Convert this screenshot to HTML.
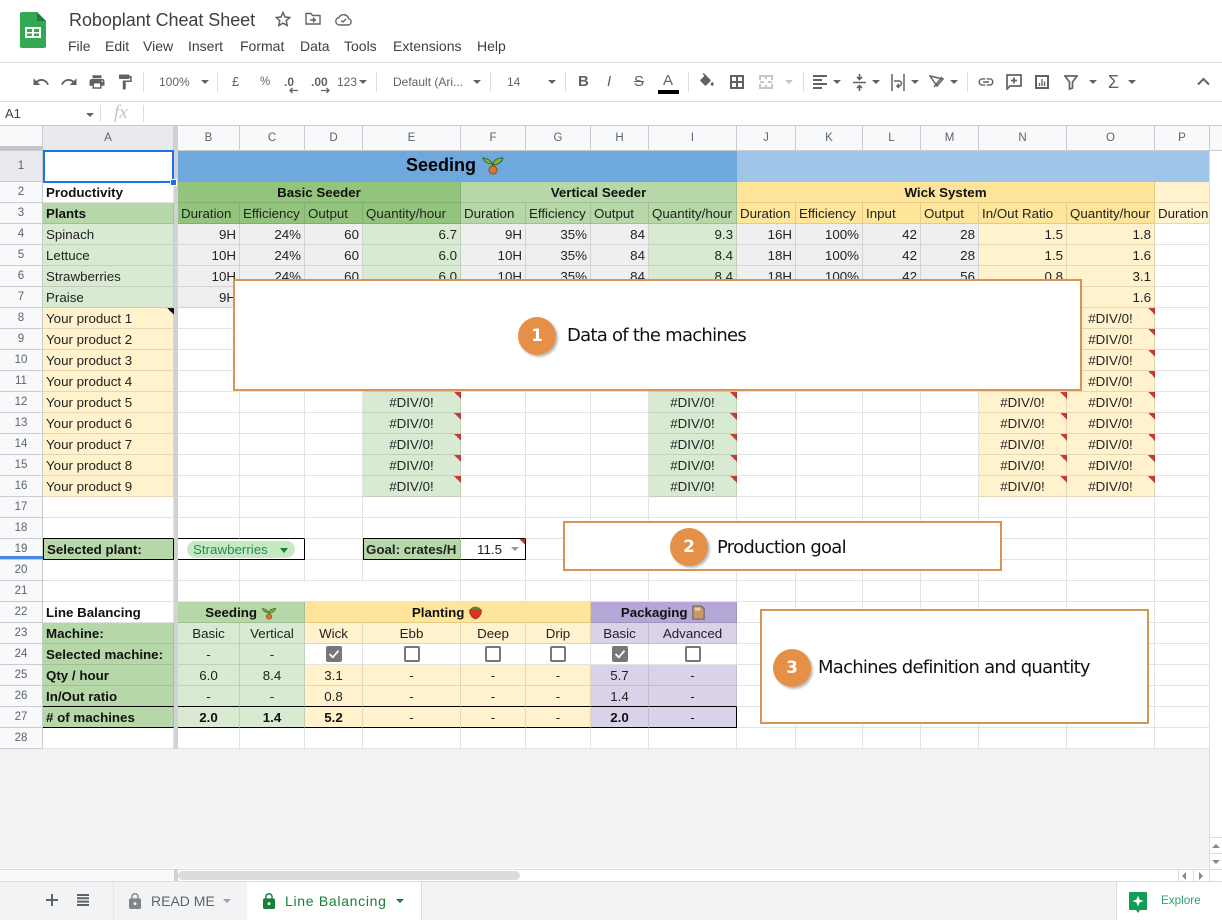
<!DOCTYPE html>
<html><head><meta charset="utf-8"><title>Roboplant Cheat Sheet</title>
<style>
html,body{margin:0;padding:0;background:#fff}
body{width:1222px;height:920px;position:relative;overflow:hidden;font-family:"Liberation Sans",Arial,sans-serif;color:#222}
.a{position:absolute;white-space:nowrap}
.m{font-size:14px;top:38px;color:#3c4043;line-height:16px}
.t{font-size:12px;color:#5f6368;top:74px;line-height:16px}
.sep{position:absolute;top:72px;width:1px;height:20px;background:#dadce0}
.car{position:absolute;width:0;height:0;border-left:4px solid transparent;border-right:4px solid transparent;border-top:4px solid #5f6368}
svg.i{position:absolute;fill:#5f6368}
table{position:absolute;left:0;top:126px;border-collapse:separate;border-spacing:0;table-layout:fixed;width:1210px}
td{box-sizing:border-box;height:21px;padding:2px 3px 0;font-size:13.33px;line-height:18px;white-space:nowrap;overflow:hidden;border-right:1px solid rgba(0,0,0,.11);border-bottom:1px solid rgba(0,0,0,.11);color:#222}
td.h{background:#f8f9fa;color:#5f6368;font-size:11.5px;text-align:center;padding:0;border-color:#c9cbcf}
td.s{background:#e8eaed}
td.z{background:#d0d2d6;padding:0;border:0}
.c{text-align:center}.r{text-align:right}.b{font-weight:bold;color:#111}
.g{background-color:#d9ead3}.gg{background-color:#b6d7a8}.dg{background-color:#93c47d}
.y{background-color:#fff2cc}.yy{background-color:#ffe599}
.p{background-color:#d9d2e9}.pp{background-color:#b4a7d6}.e{background-color:#efefef}
.tr,.tk{background-repeat:no-repeat;background-origin:border-box;background-position:right top;background-size:7px 7px}
.tr{background-image:linear-gradient(to bottom left,#cc3b33 50%,transparent 50%)}
.tk{background-image:linear-gradient(to bottom left,#111 50%,transparent 50%)}
.bt{border-top:1px solid #000}.bb{border-bottom:1px solid #000}.bl{border-left:1px solid #000}.br{border-right:1px solid #000}
.box{position:absolute;box-sizing:border-box;background:#fff;border:2px solid #d69455}
.cir{position:absolute;width:38px;height:38px;border-radius:50%;background:#e58f47;color:#fff;font:bold 17px/38px "DejaVu Sans",sans-serif;text-align:center;box-shadow:2px 2px 2px #bbb}
.lab{position:absolute;white-space:nowrap;font:18px/24px "DejaVu Sans",sans-serif;letter-spacing:-.74px;color:#111}
.cb{display:inline-block;box-sizing:border-box;width:16px;height:16px;border:2px solid #777;border-radius:2px;vertical-align:middle;margin-top:-1px;background:#fff}
</style></head><body>

<!-- Header -->
<svg class="a" style="left:20px;top:12px" width="26" height="36" viewBox="0 0 26 36"><path d="M2 0h15l9 9v25a2 2 0 0 1-2 2H2a2 2 0 0 1-2-2V2a2 2 0 0 1 2-2z" fill="#34a853"/><path d="M17 0l9 9h-9z" fill="#188038"/><path d="M5 15h16v11H5z" fill="#fff"/><path d="M7 17h5v3H7zM14 17h5v3h-5zM7 21.500h5V24H7zM14 21.500h5V24h-5z" fill="#34a853"/></svg>
<div class="a" style="left:69px;top:9px;font-size:18px;line-height:22px;color:#3c4043;letter-spacing:-.05px">Roboplant Cheat Sheet</div>
<svg class="i" style="left:275px;top:11px;fill:none;stroke:#5f6368;stroke-width:1.500" width="16" height="16" viewBox="0 0 16 16"><path d="M8 1.500l2 4.500 4.800.5-3.600 3.200 1 4.800L8 12.100 3.800 14.500l1-4.800L1.200 6.500 6 6z"/></svg>
<svg class="i" style="left:305px;top:12px;fill:none;stroke:#5f6368;stroke-width:1.400" width="16" height="14" viewBox="0 0 16 14"><path d="M1 2.500V12h14V3.500H7.500L6 1.500H1zM5 8h5M8 5.800L10.300 8 8 10.200"/></svg>
<svg class="i" style="left:335px;top:13px;fill:none;stroke:#5f6368;stroke-width:1.400" width="17" height="13" viewBox="0 0 17 13"><path d="M4 12h9a3.300 3.300 0 0 0 .6-6.500A5.200 5.200 0 0 0 4 4.500 3.800 3.800 0 0 0 4 12zM6 7.500l2 1.500 3-3"/></svg>
<span class="a m" style="left:68px">File</span><span class="a m" style="left:105px">Edit</span><span class="a m" style="left:143px">View</span><span class="a m" style="left:188px">Insert</span><span class="a m" style="left:240px">Format</span><span class="a m" style="left:300px">Data</span><span class="a m" style="left:344px">Tools</span><span class="a m" style="left:393px">Extensions</span><span class="a m" style="left:477px">Help</span>

<div class="a" style="left:0;top:62px;width:1222px;height:1px;background:#dadce0"></div>
<div class="a" style="left:0;top:101px;width:1222px;height:1px;background:#dadce0"></div>

<!-- Toolbar -->
<svg class="i" style="left:32px;top:73px" width="18" height="18" viewBox="0 0 24 24"><path d="M12.500 8c-2.650 0-5.050.99-6.900 2.600L2 7v9h9l-3.620-3.620c1.390-1.160 3.160-1.880 5.120-1.880 3.540 0 6.550 2.310 7.600 5.500l2.370-.78C21.080 11.030 17.150 8 12.500 8z"/></svg>
<svg class="i" style="left:60px;top:73px" width="18" height="18" viewBox="0 0 24 24"><path d="M18.400 10.600C16.550 8.990 14.150 8 11.500 8c-4.650 0-8.580 3.030-9.960 7.220L3.900 16c1.050-3.190 4.050-5.500 7.600-5.500 1.950 0 3.730.72 5.120 1.880L13 16h9V7l-3.600 3.600z"/></svg>
<svg class="i" style="left:88px;top:73px" width="18" height="18" viewBox="0 0 24 24"><path d="M19 8H5c-1.660 0-3 1.340-3 3v6h4v4h12v-4h4v-6c0-1.660-1.340-3-3-3zm-3 11H8v-5h8v5zm3-7c-.55 0-1-.45-1-1s.45-1 1-1 1 .45 1 1-.45 1-1 1zm-1-9H6v4h12V3z"/></svg>
<svg class="i" style="left:116px;top:73px" width="18" height="18" viewBox="0 0 24 24"><path d="M18 4V3c0-.55-.45-1-1-1H5c-.55 0-1 .45-1 1v4c0 .55.45 1 1 1h12c.55 0 1-.45 1-1V6h1v4H9v11c0 .55.45 1 1 1h2c.55 0 1-.45 1-1v-9h8V4h-3z"/></svg>
<div class="sep" style="left:143px"></div>
<span class="a t" style="left:159px">100%</span><div class="car" style="left:201px;top:80px"></div>
<div class="sep" style="left:217px"></div>
<span class="a t" style="left:232px;top:74px;font-size:13px">£</span><span class="a t" style="left:260px;top:74px;font-size:11.5px">%</span>
<span class="a t" style="left:284px;top:74px"><b>.0</b></span><svg class="i" style="left:289px;top:87px;fill:none;stroke:#5f6368;stroke-width:1.300" width="10" height="7"><path d="M9 3.500H1M3.500 1L1 3.500 3.500 6"/></svg>
<span class="a t" style="left:311px;top:74px"><b>.00</b></span><svg class="i" style="left:320px;top:87px;fill:none;stroke:#5f6368;stroke-width:1.300" width="10" height="7"><path d="M1 3.500h8M6.500 1L9 3.500 6.500 6"/></svg>
<span class="a t" style="left:337px;top:74px">123</span><div class="car" style="left:359px;top:80px"></div>
<div class="sep" style="left:376px"></div>
<span class="a t" style="left:393px;top:74px">Default (Ari...</span><div class="car" style="left:473px;top:80px"></div>
<div class="sep" style="left:490px"></div>
<span class="a t" style="left:507px">14</span><div class="car" style="left:548px;top:80px"></div>
<div class="sep" style="left:565px"></div>
<span class="a" style="left:578px;top:74px;font:bold 15px/16px 'Liberation Sans',sans-serif;color:#5f6368">B</span>
<span class="a" style="left:607px;top:74px;font:italic 15px/16px 'Liberation Sans',sans-serif;color:#5f6368">I</span>
<span class="a" style="left:634px;top:74px;font:15px/16px 'Liberation Sans',sans-serif;color:#5f6368;text-decoration:line-through">S</span>
<span class="a" style="left:663px;top:73px;font:15px/16px 'Liberation Sans',sans-serif;color:#5f6368">A</span>
<div class="a" style="left:658px;top:90px;width:21px;height:4px;background:#000"></div>
<div class="sep" style="left:688px"></div>
<svg class="i" style="left:698px;top:73px" width="18" height="18" viewBox="0 0 24 24"><path d="M16.560 8.940L7.620 0 6.210 1.410l2.380 2.380-5.150 5.150c-.59.59-.59 1.540 0 2.120l5.500 5.500c.29.29.68.44 1.060.44s.77-.15 1.060-.44l5.500-5.500c.59-.58.59-1.530 0-2.120zM19 11.500s-2 2.170-2 3.500c0 1.100.9 2 2 2s2-.9 2-2c0-1.330-2-3.500-2-3.500z"/></svg>
<svg class="i" style="left:730px;top:75px;fill:none;stroke:#5f6368;stroke-width:2" width="14" height="14"><path d="M1 1h12v12H1zM7 1v12M1 7h12"/></svg>
<svg class="i" style="left:759px;top:75px;fill:none;stroke:#c4c6c9;stroke-width:2" width="14" height="14"><path d="M1 5V1h12v4M1 9v4h12V9M7 1v3M7 10v3M1 7h4M9 7h4"/></svg>
<div class="car" style="left:785px;top:80px;border-top-color:#c4c6c9"></div>
<div class="sep" style="left:803px"></div>
<svg class="i" style="left:813px;top:75px" width="15" height="14"><path d="M0 0h14v2H0zM0 4h9v2H0zM0 8h14v2H0zM0 12h9v2H0z"/></svg><div class="car" style="left:833px;top:80px"></div>
<svg class="i" style="left:853px;top:74px;fill:none;stroke:#5f6368;stroke-width:1.600" width="13" height="17"><path d="M0 8.500h13M6.500 0v5M4 3l2.500 2.500L9 3M6.500 17v-5M4 14l2.500-2.500L9 14"/></svg><div class="car" style="left:872px;top:80px"></div>
<svg class="i" style="left:891px;top:74px;fill:none;stroke:#5f6368;stroke-width:1.500" width="14" height="17"><path d="M1 0v17M13 0v17M3 7h5a2.500 2.500 0 0 1 0 5H6M8 10l-2 2 2 2"/></svg><div class="car" style="left:911px;top:80px"></div>
<svg class="i" style="left:929px;top:74px;fill:none;stroke:#5f6368;stroke-width:1.500" width="17" height="17"><path d="M1 2l13 3-6 7zM5 13L13 3"/></svg><div class="car" style="left:950px;top:80px"></div>
<div class="sep" style="left:967px"></div>
<svg class="i" style="left:977px;top:73px" width="18" height="18" viewBox="0 0 24 24"><path d="M3.900 12c0-1.710 1.390-3.100 3.100-3.100h4V7H7c-2.760 0-5 2.240-5 5s2.240 5 5 5h4v-1.900H7c-1.710 0-3.100-1.390-3.100-3.100zM8 13h8v-2H8v2zm9-6h-4v1.900h4c1.710 0 3.100 1.390 3.100 3.100s-1.390 3.100-3.100 3.100h-4V17h4c2.760 0 5-2.240 5-5s-2.240-5-5-5z"/></svg>
<svg class="i" style="left:1006px;top:74px;fill:none;stroke:#5f6368;stroke-width:1.700" width="16" height="16"><path d="M1 1h14v11H4l-3 3zM8 3.500v6M5 6.500h6"/></svg>
<svg class="i" style="left:1035px;top:75px;fill:none;stroke:#5f6368;stroke-width:2" width="14" height="14"><path d="M1 1h12v12H1z"/><path d="M4.500 11V8M7 11V4M9.500 11V6.500" stroke-width="1.300"/></svg>
<svg class="i" style="left:1064px;top:75px;fill:none;stroke:#5f6368;stroke-width:1.700" width="14" height="15"><path d="M1 1h12L8.500 7v6l-3 1V7z"/></svg><div class="car" style="left:1089px;top:80px"></div>
<span class="a" style="left:1108px;top:72px;font:18px/20px 'Liberation Sans',sans-serif;color:#5f6368">Σ</span><div class="car" style="left:1128px;top:80px"></div>
<svg class="i" style="left:1197px;top:77px;fill:none;stroke:#5f6368;stroke-width:2" width="13" height="9"><path d="M1 7.500l5.500-5.500 5.500 5.500"/></svg>

<!-- Formula bar -->
<span class="a" style="left:5px;top:106px;font-size:13px;line-height:16px;color:#3c4043">A1</span>
<div class="car" style="left:86px;top:113px"></div>
<div class="a" style="left:100px;top:105px;width:1px;height:17px;background:#dadce0"></div>
<span class="a" style="left:114px;top:102px;font:italic 19px/22px 'Liberation Serif',serif;color:#c4c6c9">fx</span>
<div class="a" style="left:143px;top:105px;width:1px;height:17px;background:#dadce0"></div>
<div class="a" style="left:0;top:125px;width:1222px;height:1px;background:#c9cbcf"></div>

<!-- Grid -->
<table>
<colgroup><col style="width:43px"><col style="width:131px"><col style="width:4px"><col style="width:62px"><col style="width:65px"><col style="width:58px"><col style="width:98px"><col style="width:65px"><col style="width:65px"><col style="width:58px"><col style="width:88px"><col style="width:59px"><col style="width:67px"><col style="width:58px"><col style="width:58px"><col style="width:88px"><col style="width:88px"><col style="width:55px"></colgroup>
<tr style="height:25px"><td class="h" style="height:25px"></td><td class="h s">A</td><td class="z"></td><td class="h">B</td><td class="h">C</td><td class="h">D</td><td class="h">E</td><td class="h">F</td><td class="h">G</td><td class="h">H</td><td class="h">I</td><td class="h">J</td><td class="h">K</td><td class="h">L</td><td class="h">M</td><td class="h">N</td><td class="h">O</td><td class="h">P</td></tr>
<tr><td class="h s" style="height:31px">1</td><td></td><td class="z"></td><td colspan="8" class="c" style="background:#6fa8dc;border:0;font:bold 18px/26px 'Liberation Sans',sans-serif;color:#000;padding:0 4px 4px 0;height:31px">Seeding <svg width="24" height="22" viewBox="0 0 24 22" style="vertical-align:-4px"><path d="M12 13C11 9 9 6 2 5c1 4 5 6 10 6M12 12c0-4 3-7 10-7-1 4-5 7-10 7" fill="#7cb342" stroke="#33691e" stroke-width="1"/><path d="M12 10v6" stroke="#33691e" stroke-width="1.500"/><circle cx="12" cy="17" r="4" fill="#d97a2b" stroke="#8a4a12"/></svg></td><td colspan="7" style="background:#9fc5e8;border:0"></td></tr>
<tr><td class="h">2</td><td class="b">Productivity</td><td class="z"></td><td colspan="4" class="dg b c">Basic Seeder</td><td colspan="4" class="gg b c">Vertical Seeder</td><td colspan="6" class="yy b c">Wick System</td><td class="y"></td></tr>
<tr><td class="h">3</td><td class="gg b">Plants</td><td class="z"></td><td class="dg">Duration</td><td class="dg">Efficiency</td><td class="dg">Output</td><td class="dg">Quantity/hour</td><td class="gg">Duration</td><td class="gg">Efficiency</td><td class="gg">Output</td><td class="gg">Quantity/hour</td><td class="yy">Duration</td><td class="yy">Efficiency</td><td class="yy">Input</td><td class="yy">Output</td><td class="yy">In/Out Ratio</td><td class="yy">Quantity/hour</td><td class="y">Duration</td></tr>
<tr><td class="h">4</td><td class="g">Spinach</td><td class="z"></td><td class="e r">9H</td><td class="e r">24%</td><td class="e r">60</td><td class="g r">6.7</td><td class="e r">9H</td><td class="e r">35%</td><td class="e r">84</td><td class="g r">9.3</td><td class="e r">16H</td><td class="e r">100%</td><td class="e r">42</td><td class="e r">28</td><td class="y r">1.5</td><td class="y r">1.8</td><td></td></tr>
<tr><td class="h">5</td><td class="g">Lettuce</td><td class="z"></td><td class="e r">10H</td><td class="e r">24%</td><td class="e r">60</td><td class="g r">6.0</td><td class="e r">10H</td><td class="e r">35%</td><td class="e r">84</td><td class="g r">8.4</td><td class="e r">18H</td><td class="e r">100%</td><td class="e r">42</td><td class="e r">28</td><td class="y r">1.5</td><td class="y r">1.6</td><td></td></tr>
<tr><td class="h">6</td><td class="g">Strawberries</td><td class="z"></td><td class="e r">10H</td><td class="e r">24%</td><td class="e r">60</td><td class="g r">6.0</td><td class="e r">10H</td><td class="e r">35%</td><td class="e r">84</td><td class="g r">8.4</td><td class="e r">18H</td><td class="e r">100%</td><td class="e r">42</td><td class="e r">56</td><td class="y r">0.8</td><td class="y r">3.1</td><td></td></tr>
<tr><td class="h">7</td><td class="g">Praise</td><td class="z"></td><td class="e r">9H</td><td></td><td></td><td class="g"></td><td></td><td></td><td></td><td class="g"></td><td></td><td></td><td></td><td></td><td class="y"></td><td class="y r">1.6</td><td></td></tr>
<tr><td class="h">8</td><td class="y tk">Your product 1</td><td class="z"></td><td></td><td></td><td></td><td class="g"></td><td></td><td></td><td></td><td class="g"></td><td></td><td></td><td></td><td></td><td class="y"></td><td class="y c tr">#DIV/0!</td><td></td></tr>
<tr><td class="h">9</td><td class="y">Your product 2</td><td class="z"></td><td></td><td></td><td></td><td class="g"></td><td></td><td></td><td></td><td class="g"></td><td></td><td></td><td></td><td></td><td class="y"></td><td class="y c tr">#DIV/0!</td><td></td></tr>
<tr><td class="h">10</td><td class="y">Your product 3</td><td class="z"></td><td></td><td></td><td></td><td class="g"></td><td></td><td></td><td></td><td class="g"></td><td></td><td></td><td></td><td></td><td class="y"></td><td class="y c tr">#DIV/0!</td><td></td></tr>
<tr><td class="h">11</td><td class="y">Your product 4</td><td class="z"></td><td></td><td></td><td></td><td class="g"></td><td></td><td></td><td></td><td class="g"></td><td></td><td></td><td></td><td></td><td class="y"></td><td class="y c tr">#DIV/0!</td><td></td></tr>
<tr><td class="h">12</td><td class="y">Your product 5</td><td class="z"></td><td></td><td></td><td></td><td class="g c tr">#DIV/0!</td><td></td><td></td><td></td><td class="g c tr">#DIV/0!</td><td></td><td></td><td></td><td></td><td class="y c tr">#DIV/0!</td><td class="y c tr">#DIV/0!</td><td></td></tr>
<tr><td class="h">13</td><td class="y">Your product 6</td><td class="z"></td><td></td><td></td><td></td><td class="g c tr">#DIV/0!</td><td></td><td></td><td></td><td class="g c tr">#DIV/0!</td><td></td><td></td><td></td><td></td><td class="y c tr">#DIV/0!</td><td class="y c tr">#DIV/0!</td><td></td></tr>
<tr><td class="h">14</td><td class="y">Your product 7</td><td class="z"></td><td></td><td></td><td></td><td class="g c tr">#DIV/0!</td><td></td><td></td><td></td><td class="g c tr">#DIV/0!</td><td></td><td></td><td></td><td></td><td class="y c tr">#DIV/0!</td><td class="y c tr">#DIV/0!</td><td></td></tr>
<tr><td class="h">15</td><td class="y">Your product 8</td><td class="z"></td><td></td><td></td><td></td><td class="g c tr">#DIV/0!</td><td></td><td></td><td></td><td class="g c tr">#DIV/0!</td><td></td><td></td><td></td><td></td><td class="y c tr">#DIV/0!</td><td class="y c tr">#DIV/0!</td><td></td></tr>
<tr><td class="h">16</td><td class="y">Your product 9</td><td class="z"></td><td></td><td></td><td></td><td class="g c tr">#DIV/0!</td><td></td><td></td><td></td><td class="g c tr">#DIV/0!</td><td></td><td></td><td></td><td></td><td class="y c tr">#DIV/0!</td><td class="y c tr">#DIV/0!</td><td></td></tr>
<tr><td class="h">17</td><td></td><td class="z"></td><td></td><td></td><td></td><td></td><td></td><td></td><td></td><td></td><td></td><td></td><td></td><td></td><td></td><td></td><td></td></tr>
<tr><td class="h">18</td><td style="border-bottom-color:#000"></td><td class="z"></td><td style="border-bottom-color:#000"></td><td style="border-bottom-color:#000"></td><td></td><td style="border-bottom-color:#000"></td><td style="border-bottom-color:#000"></td><td></td><td></td><td></td><td></td><td></td><td></td><td></td><td></td><td></td><td></td></tr>
<tr><td class="h">19</td><td class="gg b bb" style="border-right-color:#000;border-left:1px solid #000;padding-left:3px">Selected plant:</td><td class="z"></td><td colspan="2" class="bb br" style="padding:0 0 0 9px;line-height:19px"><span style="display:inline-block;background:#c6e9c2;color:#1e8e5a;border-radius:9px;padding:0 7px 0 6px;line-height:17px;height:17px;font-size:13.33px">Strawberries <span style="display:inline-block;width:0;height:0;border-left:4px solid transparent;border-right:4px solid transparent;border-top:5px solid #188038;margin-left:8px;vertical-align:1px"></span></span></td><td></td><td class="gg bb bl" style="font-weight:bold;color:#222;padding-left:2px">Goal: crates/H</td><td class="bb br tr" style="padding-right:23px;text-align:right;position:relative">11.5<span style="position:absolute;right:6px;top:8px;width:0;height:0;border-left:4px solid transparent;border-right:4px solid transparent;border-top:4px solid #999"></span></td><td></td><td></td><td></td><td></td><td></td><td></td><td></td><td></td><td></td><td></td></tr>
<tr><td class="h">20</td><td></td><td class="z"></td><td></td><td></td><td></td><td></td><td></td><td></td><td></td><td></td><td></td><td></td><td></td><td></td><td></td><td></td><td></td></tr>
<tr><td class="h">21</td><td></td><td class="z"></td><td></td><td colspan="3"></td><td></td><td></td><td></td><td></td><td></td><td></td><td></td><td></td><td></td><td></td><td></td></tr>
<tr><td class="h">22</td><td class="b">Line Balancing</td><td class="z"></td><td colspan="2" class="gg b c">Seeding <svg width="16" height="15" viewBox="0 0 24 22" style="vertical-align:-3px"><path d="M12 13C11 9 9 6 2 5c1 4 5 6 10 6M12 12c0-4 3-7 10-7-1 4-5 7-10 7" fill="#7cb342" stroke="#33691e"/><path d="M12 10v6" stroke="#33691e" stroke-width="1.500"/><circle cx="12" cy="17" r="4" fill="#d97a2b" stroke="#8a4a12"/></svg></td><td colspan="4" class="yy b c">Planting <svg width="15" height="15" viewBox="0 0 16 16" style="vertical-align:-3px"><path d="M8 15C3 13 1 8 2 5c2-2 10-2 12 0 1 3-1 8-6 10z" fill="#d9352b" stroke="#8f1f18" stroke-width=".7"/><path d="M3 4c2-3 8-3 10 0-3 1-7 1-10 0z" fill="#4c8f2f"/></svg></td><td colspan="2" class="pp b c">Packaging <svg width="15" height="15" viewBox="0 0 16 16" style="vertical-align:-3px"><path d="M2 1h9l3 3v11H2z" fill="#c79a68" stroke="#555" stroke-width="1"/><path d="M4 3h6v3H4z" fill="#e7cfa9"/></svg></td><td></td><td></td><td></td><td></td><td></td><td></td><td></td></tr>
<tr><td class="h">23</td><td class="gg b">Machine:</td><td class="z"></td><td class="g c">Basic</td><td class="g c">Vertical</td><td class="y c">Wick</td><td class="y c">Ebb</td><td class="y c">Deep</td><td class="y c">Drip</td><td class="p c">Basic</td><td class="p c">Advanced</td><td></td><td></td><td></td><td></td><td></td><td></td><td></td></tr>
<tr><td class="h">24</td><td class="gg b">Selected machine:</td><td class="z"></td><td class="g c">-</td><td class="g c">-</td><td class="c" style="padding:0"><span class="cb" style="background:#777;position:relative"><svg width="12" height="12" style="position:absolute;left:0;top:0;fill:none;stroke:#fff;stroke-width:1.800"><path d="M1.500 6l3.300 3.300 5.700-6.600"/></svg></span></td><td class="c" style="padding:0"><span class="cb"></span></td><td class="c" style="padding:0"><span class="cb"></span></td><td class="c" style="padding:0"><span class="cb"></span></td><td class="c" style="padding:0"><span class="cb" style="background:#777;position:relative"><svg width="12" height="12" style="position:absolute;left:0;top:0;fill:none;stroke:#fff;stroke-width:1.800"><path d="M1.500 6l3.300 3.300 5.700-6.600"/></svg></span></td><td class="c" style="padding:0"><span class="cb"></span></td><td></td><td></td><td></td><td></td><td></td><td></td><td></td></tr>
<tr><td class="h">25</td><td class="gg b">Qty / hour</td><td class="z"></td><td class="g c">6.0</td><td class="g c">8.4</td><td class="y c">3.1</td><td class="y c">-</td><td class="y c">-</td><td class="y c">-</td><td class="p c">5.7</td><td class="p c">-</td><td></td><td></td><td></td><td></td><td></td><td></td><td></td></tr>
<tr><td class="h">26</td><td class="gg b" style="border-bottom-color:#000">In/Out ratio</td><td class="z"></td><td class="g c" style="border-bottom-color:#000">-</td><td class="g c" style="border-bottom-color:#000">-</td><td class="y c" style="border-bottom-color:#000">0.8</td><td class="y c" style="border-bottom-color:#000">-</td><td class="y c" style="border-bottom-color:#000">-</td><td class="y c" style="border-bottom-color:#000">-</td><td class="p c" style="border-bottom-color:#000">1.4</td><td class="p c" style="border-bottom-color:#000">-</td><td></td><td></td><td></td><td></td><td></td><td></td><td></td></tr>
<tr><td class="h">27</td><td class="gg b bb"># of machines</td><td class="z"></td><td class="g c b bb">2.0</td><td class="g c b bb">1.4</td><td class="y c b bb">5.2</td><td class="y c bb">-</td><td class="y c bb">-</td><td class="y c bb">-</td><td class="p c b bb">2.0</td><td class="p c bb br">-</td><td></td><td></td><td></td><td></td><td></td><td></td><td></td></tr>
<tr><td class="h">28</td><td></td><td class="z"></td><td></td><td></td><td></td><td></td><td></td><td></td><td></td><td></td><td></td><td></td><td></td><td></td><td></td><td></td><td></td></tr>
</table>

<!-- header corners / selection -->
<div class="a" style="left:0;top:146px;width:43px;height:4px;background:#c4c6ca"></div>
<div class="a" style="left:0;top:556px;width:43px;height:3px;background:#4a86e8"></div>
<div class="a" style="left:43px;top:150px;width:131px;height:33px;box-sizing:border-box;border:2px solid #1a73e8"></div>
<div class="a" style="left:170px;top:179px;width:7px;height:7px;background:#1a73e8;border:1px solid #fff;box-sizing:border-box"></div>
<div class="a" style="left:1210px;top:126px;width:12px;height:25px;background:#f8f9fa;border-bottom:1px solid #c9cbcf;box-sizing:border-box"></div>

<!-- Callouts -->
<div class="box" style="left:233px;top:279px;width:849px;height:112px"></div>
<div class="cir" style="left:518px;top:317px">1</div>
<div class="lab" style="left:567px;top:324px">Data of the machines</div>
<div class="box" style="left:563px;top:521px;width:439px;height:50px"></div>
<div class="cir" style="left:670px;top:528px">2</div>
<div class="lab" style="left:717px;top:536px">Production goal</div>
<div class="box" style="left:760px;top:609px;width:389px;height:115px"></div>
<div class="cir" style="left:773px;top:649px">3</div>
<div class="lab" style="left:818px;top:656px">Machines definition and quantity</div>

<!-- Empty area & scrollbars -->
<div class="a" style="left:0;top:749px;width:1209px;height:119px;background:#f3f3f5"></div>
<div class="a" style="left:1209px;top:151px;width:1px;height:717px;background:#dadce0"></div>
<div class="a" style="left:1210px;top:837px;width:12px;height:1px;background:#dadce0"></div>
<div class="a" style="left:1210px;top:853px;width:12px;height:1px;background:#dadce0"></div>
<div class="car" style="left:1212px;top:844px;border-top:0;border-bottom:4px solid #888"></div>
<div class="car" style="left:1212px;top:860px;border-top-color:#888"></div>
<div class="a" style="left:0;top:869px;width:1222px;height:1px;background:#dadce0"></div>
<div class="a" style="left:0;top:870px;width:174px;height:11px;background:#f8f9fa"></div>
<div class="a" style="left:174px;top:869px;width:4px;height:13px;background:#d0d2d6"></div>
<div class="a" style="left:178px;top:871px;width:342px;height:9px;background:#dadbdd;border-radius:5px"></div>
<div class="a" style="left:1178px;top:870px;width:1px;height:11px;background:#dadce0"></div>
<div class="a" style="left:1193px;top:870px;width:1px;height:11px;background:#dadce0"></div>
<div class="a" style="left:1209px;top:870px;width:1px;height:11px;background:#dadce0"></div>
<div class="a" style="left:1182px;top:872px;width:0;height:0;border-top:4px solid transparent;border-bottom:4px solid transparent;border-right:4px solid #888"></div>
<div class="a" style="left:1199px;top:872px;width:0;height:0;border-top:4px solid transparent;border-bottom:4px solid transparent;border-left:4px solid #888"></div>

<!-- Tabs -->
<div class="a" style="left:0;top:881px;width:1222px;height:39px;background:#f1f3f4;border-top:1px solid #dadce0;box-sizing:border-box"></div>
<svg class="i" style="left:46px;top:894px;fill:none;stroke:#5f6368;stroke-width:2" width="12" height="12"><path d="M6 0v12M0 6h12"/></svg>
<svg class="i" style="left:76px;top:894px" width="14" height="12"><path d="M1 0h12v2H1zM1 3.300h12v2H1zM1 6.600h12v2H1zM1 10h12v2H1z"/></svg>
<div class="a" style="left:113px;top:882px;width:1px;height:38px;background:#e3e4e6"></div>
<svg class="i" style="left:129px;top:893px;fill:#80868b" width="12" height="16" viewBox="4 1 16 21" preserveAspectRatio="none"><path d="M18 8h-1V6c0-2.760-2.240-5-5-5S7 3.240 7 6v2H6c-1.100 0-2 .9-2 2v10c0 1.100.9 2 2 2h12c1.100 0 2-.9 2-2V10c0-1.100-.9-2-2-2zm-6 9c-1.100 0-2-.9-2-2s.9-2 2-2 2 .9 2 2-.9 2-2 2zm3.100-9H8.900V6c0-1.710 1.390-3.100 3.100-3.100 1.710 0 3.100 1.390 3.100 3.100v2z"/></svg>
<span class="a" style="left:151px;top:893px;font-size:14px;line-height:16px;color:#5f6368">READ ME</span>
<div class="car" style="left:223px;top:899px;border-top-color:#9aa0a6"></div>
<div class="a" style="left:247px;top:882px;width:175px;height:38px;background:#fff;border-right:1px solid #dadce0;box-sizing:border-box"></div>
<svg class="i" style="left:263px;top:893px;fill:#188038" width="12" height="16" viewBox="4 1 16 21" preserveAspectRatio="none"><path d="M18 8h-1V6c0-2.760-2.240-5-5-5S7 3.240 7 6v2H6c-1.100 0-2 .9-2 2v10c0 1.100.9 2 2 2h12c1.100 0 2-.9 2-2V10c0-1.100-.9-2-2-2zm-6 9c-1.100 0-2-.9-2-2s.9-2 2-2 2 .9 2 2-.9 2-2 2zm3.100-9H8.900V6c0-1.710 1.390-3.100 3.100-3.100 1.710 0 3.100 1.390 3.100 3.100v2z"/></svg>
<span class="a" style="left:285px;top:893px;font-size:14px;line-height:16px;color:#188038;letter-spacing:.7px">Line Balancing</span>
<div class="car" style="left:396px;top:899px;border-top-color:#188038"></div>
<div class="a" style="left:1116px;top:882px;width:106px;height:38px;background:#fff;border-left:1px solid #dadce0;box-sizing:border-box"></div>
<svg class="a" style="left:1129px;top:892px" width="18" height="21" viewBox="0 0 18 21"><path d="M1 0h16a1 1 0 0 1 1 1v16a1 1 0 0 1-1 1h-6l-2 3-2-3H1a1 1 0 0 1-1-1V1a1 1 0 0 1 1-1z" fill="#0f9d58"/><path d="M9 3.500l1.500 4 4 1.500-4 1.500-1.500 4-1.500-4-4-1.500 4-1.500z" fill="#fff"/></svg>
<span class="a" style="left:1161px;top:894px;font-size:11.7px;line-height:14px;color:#2e9e6b">Explore</span>
</body></html>
